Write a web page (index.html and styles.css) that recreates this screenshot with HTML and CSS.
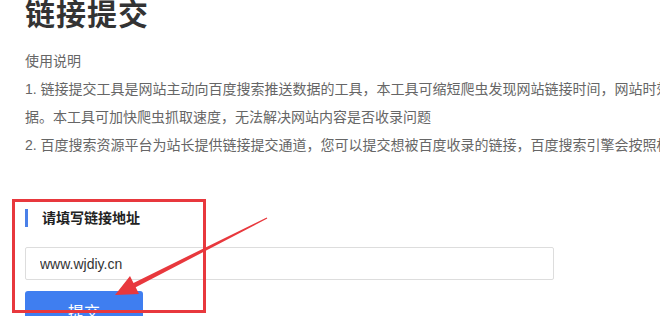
FILE: index.html
```html
<!DOCTYPE html>
<html lang="zh-CN">
<head>
    <meta charset="UTF-8" />
    <meta name="viewport" content="width=device-width, initial-scale=1.0"/>
    <title>链接提交</title>
    <link rel="stylesheet" href="styles.css">
</head>
<body>
    <div class="main">
        <h1>链接提交</h1>

        <div class="intro">
            <p>使用说明</p>
            <p>1. 链接提交工具是网站主动向百度搜索推送数据的工具，本工具可缩短爬虫发现网站链接时间，网站时效性内容建议使用链接提交工具，实时向搜索推送数据。本工具可加快爬虫抓取速度，无法解决网站内容是否收录问题</p>
            <p>2. 百度搜索资源平台为站长提供链接提交通道，您可以提交想被百度收录的链接，百度搜索引擎会按照标准处理，但不保证一定能够收录您提交的链接。</p>
        </div>

        <form class="submit-form">
            <!-- Link field -->
            <div class="form-title">请填写链接地址</div>
            <input type="text" class="link-input" name="url" value="www.wjdiy.cn" />
            <button type="button" class="submit-btn">提交</button>
        </form>
    </div>

    <!-- annotation drawn over the screenshot -->
    <div class="mark-box"></div>
    <svg class="mark-arrow" width="175" height="95" viewBox="0 0 175 95">
        <polygon fill="#e8383d" points="15,90 39,89 35.7,82.3 167.3,13.6 166.7,12.4 33.5,77.9 30,71"/>
    </svg>
</body>
</html>
```

FILE: styles.css
```css
body {
    margin: 0;
    padding: 0;
    background: #ffffff;
    font-family: "Liberation Sans", "Noto Sans CJK SC", sans-serif;
    overflow: hidden;
    position: relative;
}
.main {
    width: 960px;
    padding-left: 25px;
}
h1 {
    margin: 0 0 17px;
    font-size: 30px;
    line-height: 30px;
    font-weight: bold;
    color: #333333;
    letter-spacing: 1px;
}
.intro p {
    margin: 0;
    font-size: 14px;
    line-height: 28px;
    color: #666666;
}
.submit-form {
    margin-top: 50px;
}
.form-title {
    border-left: 3px solid #4a80e8;
    padding-left: 14px;
    font-size: 14px;
    line-height: 18px;
    font-weight: bold;
    color: #222222;
}
.link-input {
    display: block;
    box-sizing: border-box;
    width: 529px;
    height: 33px;
    margin-top: 20px;
    padding: 0 14px;
    border: 1px solid #dddddd;
    border-radius: 2px;
    font-family: "Liberation Sans", sans-serif;
    font-size: 14px;
    color: #333333;
    outline: none;
}
.submit-btn {
    display: block;
    width: 118px;
    height: 40px;
    margin-top: 11px;
    background: #3f7ef0;
    border: none;
    border-radius: 3px;
    color: #ffffff;
    font-family: "Noto Sans CJK SC", sans-serif;
    font-size: 16px;
}
.mark-box {
    position: absolute;
    left: 12px;
    top: 199px;
    width: 188px;
    height: 108px;
    border: 3px solid #e8383d;
}
.mark-arrow {
    position: absolute;
    left: 100px;
    top: 205px;
}
```
